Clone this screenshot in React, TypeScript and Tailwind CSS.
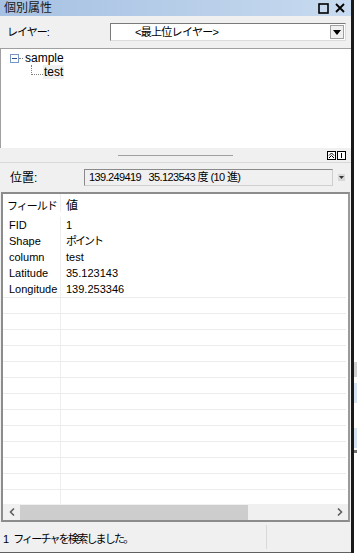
import React from "react";

const font = { fontFamily: '"Liberation Sans", "Noto Sans CJK JP", sans-serif' };

const rows: [string, string][] = [
  ["FID", "1"],
  ["Shape", "ポイント"],
  ["column", "test"],
  ["Latitude", "35.123143"],
  ["Longitude", "139.253346"],
];

export default function App() {
  const empty = Array.from({ length: 13 });
  return (
    <div className="w-[357px] h-[553px] flex bg-white overflow-hidden text-[11px] text-black leading-none" style={font}>
      <div className="w-[351px] h-full flex flex-col bg-[#f0f0f0]">
        {/* title */}
        <div className="h-[16px] flex items-center justify-between pl-[4px] pr-[6px] bg-gradient-to-r from-[#a6c1e2] to-[#c7daef]">
          <span className="text-[12px] text-[#1a1a1a]">個別属性</span>
          <div className="flex items-center gap-[6px]">
            <svg width="11" height="11" viewBox="0 0 11 11"><rect x="1" y="1" width="9" height="9" fill="none" stroke="#000" strokeWidth="1.6" /></svg>
            <svg width="10" height="10" viewBox="0 0 10 10"><path d="M1 1L9 9M9 1L1 9" stroke="#000" strokeWidth="1.8" /></svg>
          </div>
        </div>
        {/* layer row */}
        <div className="h-[32px] flex items-center pl-[7px] pr-[5px]">
          <span className="w-[103px] text-[11px] tracking-[-1px] whitespace-nowrap">レイヤー:</span>
          <div className="flex-1 h-[18px] flex items-center bg-white border border-[#7a7a7a] border-b-[#dcdcdc] border-r-[#dcdcdc]">
            <span className="flex-1 pl-[24px] text-[11px] tracking-[-0.7px] whitespace-nowrap">&lt;最上位レイヤー&gt;</span>
            <div className="w-[14px] h-[14px] mr-[1px] flex items-center justify-center bg-[#f0f0f0] border border-[#a0a0a0]">
              <svg width="8" height="5" viewBox="0 0 8 5"><path d="M0 0H8L4 5Z" fill="#000" /></svg>
            </div>
          </div>
        </div>
        {/* tree */}
        <div className="h-[100px] bg-white border-l border-t border-[#a0a0a0]">
          <div className="flex items-center pl-[9px] pt-[3px] h-[15px]">
            <div className="w-[9px] h-[9px] border border-[#7896c8] flex items-center justify-center bg-white">
              <div className="w-[5px] h-[1px] bg-[#2c4f8a]" />
            </div>
            <div className="w-[4px] border-t border-dotted border-[#808080]" />
            <span className="ml-[2px] text-[12px]">sample</span>
          </div>
          <div className="flex items-end pl-[30px] h-[15px]">
            <div className="w-[12px] h-[10px] border-l border-b border-dotted border-[#808080] mb-[4px]" />
            <span className="bg-[#f0f0f0] px-[1px] text-[12px] leading-[14px]">test</span>
          </div>
        </div>
        {/* splitter */}
        <div className="h-[14px] flex items-center relative">
          <div className="absolute left-[118px] w-[115px] top-[7px] h-[1px] bg-[#a0a0a0]" />
          <div className="ml-auto mr-[5px] flex gap-[1px] mt-[1px]">
            <div className="w-[9px] h-[9px] border border-black bg-white flex items-center justify-center">
              <svg width="7" height="7" viewBox="0 0 7 7"><path d="M1 3.5L3.5 1L6 3.5M1 6L3.5 3.5L6 6" stroke="#000" fill="none" strokeWidth="1" /></svg>
            </div>
            <div className="w-[9px] h-[9px] border border-black bg-white flex items-center justify-center">
              <div className="w-[1px] h-[5px] bg-black" />
            </div>
          </div>
        </div>
        {/* position row */}
        <div className="h-[30px] flex items-center pl-[10px] pr-[6px] border-t border-[#d8d8d8]">
          <span className="w-[74px] text-[12px]">位置:</span>
          <div className="w-[249px] h-[17px] flex items-center border border-[#8a8a8a] border-b-[#cfcfcf] border-r-[#cfcfcf] bg-[#f0f0f0] pl-[4px] text-[11px] tracking-[-0.6px] whitespace-nowrap">
            139.249419&nbsp;&nbsp;&nbsp;35.123543 度 (10 進)
          </div>
          <div className="ml-auto w-[7px] h-[7px] bg-[#d8d8d8] flex items-center justify-center">
            <svg width="5" height="3" viewBox="0 0 5 3"><path d="M0 0H5L2.5 3Z" fill="#333" /></svg>
          </div>
        </div>
        {/* table */}
        <div className="h-[330px] ml-[1px] mr-[1px] border-2 border-[#8c8c8c] border-r-[#9a9a9a] bg-white flex flex-col">
          <div className="flex-1 overflow-hidden">
            <div className="flex h-[23px] items-end pb-[5px]">
              <div className="w-[58px] pl-[4px] border-r border-[#eeeeee] h-full flex items-end text-[11px] tracking-[-1px] whitespace-nowrap">フィールド</div>
              <div className="pl-[5px] text-[12px]">値</div>
            </div>
            {rows.map(([a, b]) => (
              <div key={a} className="flex h-[16px] whitespace-nowrap">
                <div className="w-[58px] pl-[6px] flex items-center border-r border-[#eeeeee]">{a}</div>
                <div className="pl-[5px] flex items-center">
                  {b === "ポイント" ? <span className="tracking-[-2px]">{b}</span> : b}
                </div>
              </div>
            ))}
            {empty.map((_, i) => (
              <div key={i} className="flex h-[16px] border-t border-[#ececec] mr-[2px]">
                <div className="w-[58px] border-r border-[#eeeeee]" />
              </div>
            ))}
          </div>
          {/* h scrollbar */}
          <div className="h-[16px] flex items-center bg-[#f0f0f0]">
            <div className="w-[17px] flex justify-center">
              <svg width="6" height="8" viewBox="0 0 6 8"><path d="M5 0.5L1.5 4L5 7.5" stroke="#606060" strokeWidth="1.6" fill="none" /></svg>
            </div>
            <div className="w-[228px] h-[15px] bg-[#cdcdcd]" />
            <div className="flex-1" />
            <div className="w-[17px] flex justify-center">
              <svg width="6" height="8" viewBox="0 0 6 8"><path d="M1 0.5L4.5 4L1 7.5" stroke="#606060" strokeWidth="1.6" fill="none" /></svg>
            </div>
          </div>
        </div>
        {/* status */}
        <div className="flex-1 flex items-center relative border-b border-[#606060]">
          <span className="pl-[3px] text-[11px] mt-[5px] whitespace-nowrap">
            1<span className="inline-block w-[4px]" />
            <span className="tracking-[-1.8px]">フィーチャを検索しました。</span>
          </span>
          <div className="absolute left-[266px] top-[3px] bottom-[3px] w-[1px] bg-[#d8d8d8]" />
        </div>
      </div>
      <div className="w-[3px] h-full bg-[#1a1a1a]" />
      <div className="flex-1 h-full bg-white flex flex-col">
        <div className="h-[362px]" />
        <div className="h-[15px] bg-[#d0d0d0]" />
        <div className="h-[6px] bg-white" />
        <div className="h-[20px] bg-[#d6e3f3]" />
        <div className="h-[25px] bg-white" />
        <div className="h-[20px] bg-[#d6e3f3]" />
        <div className="h-[2px] bg-white" />
        <div className="h-[3px] bg-[#707070]" />
        <div className="flex-1 bg-white" />
      </div>
    </div>
  );
}
